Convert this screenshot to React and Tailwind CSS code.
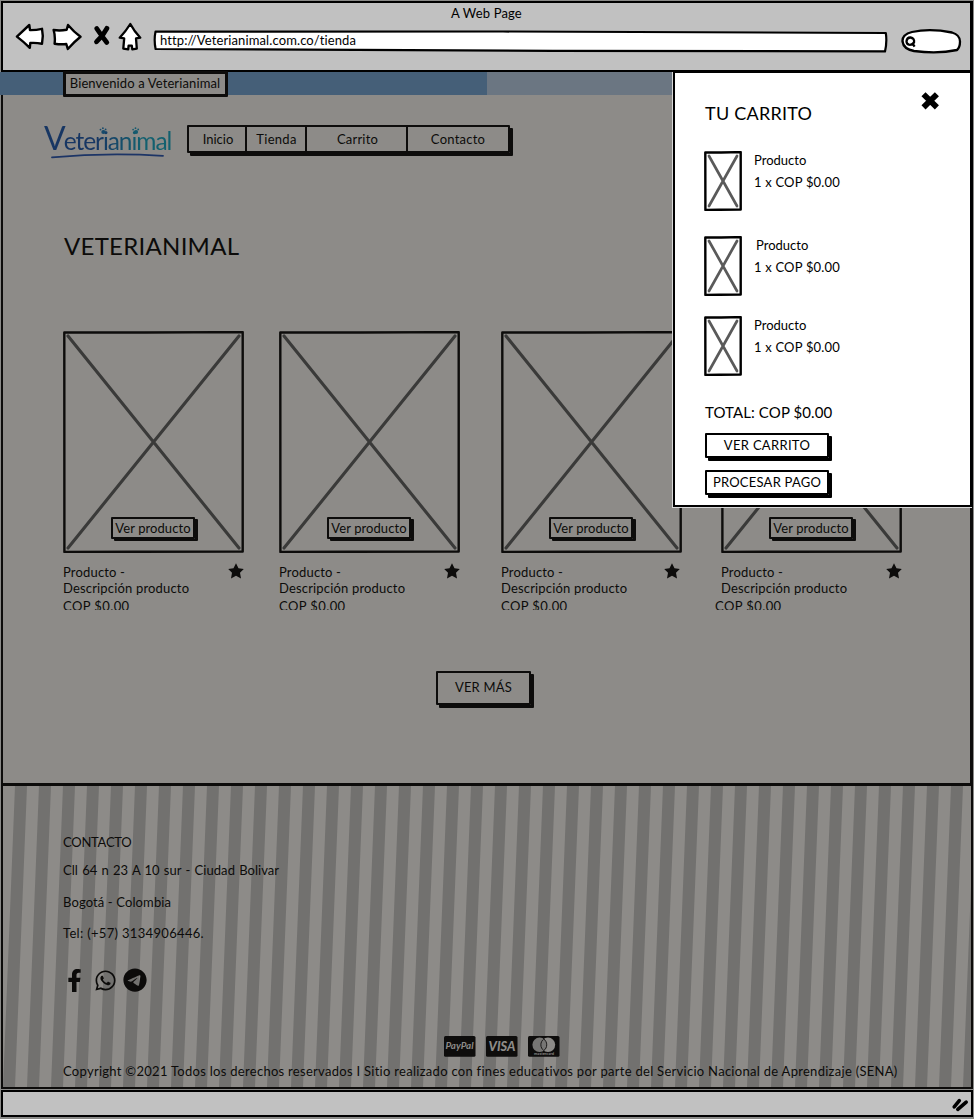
import { FaFacebookF, FaWhatsapp } from "react-icons/fa";
import { FaTelegram } from "react-icons/fa6";

const star =
  "M8 0.2 L10.5 5.2 L15.8 6 L12 9.8 L13 15.4 L8 12.7 L3 15.4 L4 9.8 L0.2 6 L5.5 5.2 Z";

/* Picture placeholder: a slightly uneven ink frame with a grey cross. */
function Placeholder({ width: w, height: h, frame, cross, stroke }) {
  return (
    <svg className="absolute inset-0" width={w} height={h} viewBox={`0 0 ${w} ${h}`} fill="none">
      <path
        d={`M5 5 L${w - 5} ${h - 5} M${w - 5} 5 L5 ${h - 5}`}
        stroke={cross}
        strokeWidth={stroke}
        strokeLinecap="round"
      />
      <path
        d={`M1.3 1.5 L${w * 0.45} 1.5 L${w - 1.3} 1.1 L${w - 1.3} ${h - 1.4} L${w * 0.4} ${h - 1.3} L1.4 ${h - 1.1} Z`}
        stroke={frame}
        strokeWidth="2.4"
        strokeLinejoin="round"
      />
    </svg>
  );
}

function Button({ className, children }) {
  return (
    <button
      className={`flex items-center justify-center whitespace-nowrap rounded-[1px] border-2 leading-4 ${className}`}
    >
      {children}
    </button>
  );
}

function BrowserBar() {
  return (
    <header className="ml-px mt-px h-[71px] w-[972px] border-b-2 border-l-2 border-r-[3px] border-t-2 border-black bg-[#c1c1c1]">
      <div className="mt-[2px] pl-[448px] text-[13px] leading-4 tracking-[0.16px]">A Web Page</div>
      <div className="flex pl-[12px]">
        <svg className="mt-px" width="30" height="30" fill="#fff" stroke="#000" strokeWidth="2.4" strokeLinejoin="round">
          <path d="M1.9 14.6 L14.3 3 L15 8.1 Q21 8.2 27 6.8 Q28.6 14 27 21.7 Q21 20.6 15.3 21 L14.8 25.8 Q9 20 1.9 14.6 Z" />
        </svg>
        <svg className="ml-[7px] mt-px" width="30" height="30" fill="#fff" stroke="#000" strokeWidth="2.4" strokeLinejoin="round">
          <path d="M1.6 8 Q8 9 14.7 7.7 L16 3 Q22 10 28.5 14.8 Q22 20 15.8 27 L14.3 22 Q9 22.6 2.6 21.7 Q3.5 14 1.6 8 Z" />
        </svg>
        <svg className="ml-[10px] mt-[3px]" width="20" height="24" fill="none" stroke="#000" strokeWidth="4.8" strokeLinecap="round">
          <path d="M4.7 4.5 Q9 11 14.8 18.4 M14.9 4.3 Q11 12 4.5 17.8" />
        </svg>
        <svg className="ml-[5px] mt-px" width="26" height="30" fill="#fff" stroke="#000" strokeWidth="2.3" strokeLinejoin="round">
          <path d="M13.3 2 Q17 9 23.3 15.7 L19 16.3 L19.8 26.6 L15.3 27.3 L14.8 23.6 L11.6 23.6 L11.2 27.3 L6.3 26.6 L7.2 16.3 L2.7 15.7 Q9 9 13.3 2 Z" />
        </svg>
        <div className="relative ml-[10px] mt-[9px] h-[24px] w-[736px]">
          <svg className="absolute inset-0" width="736" height="24" fill="#fff" stroke="#000" strokeWidth="2.2" strokeLinejoin="round">
            <path d="M2.5 1.6 L350 1.5 L732.8 3 Q734.2 12 732 21.4 L400 20.8 L2.6 19 Q0.8 10 2.5 1.6 Z" />
          </svg>
          <span className="relative block pl-[7px] pt-[2px] text-[13px] leading-4 tracking-[0.12px]">
            http://Veterianimal.com.co/tienda
          </span>
        </div>
        <svg className="ml-[11px] mt-[7px]" width="62" height="28" fill="#fff" stroke="#000" strokeWidth="2.3">
          <path d="M2.5 13.5 Q2 6.5 12 4 Q30 0.1 52 4.5 Q60 7 60 13.5 Q60 19.5 57 22 Q38 26 14 23 Q3.5 21 2.5 13.5 Z" />
          <path d="M6.5 13.2 Q7 9.3 10.5 9.5 Q14.8 10.3 14 14.5 Q12 17.3 9 16.7 Q6.5 15.9 6.5 13.2 Z M12.5 15.5 L14.6 18.6" />
        </svg>
      </div>
    </header>
  );
}

function Logo() {
  return (
    <div className="relative h-[36px] w-[130px]">
      <div className="flex items-baseline bg-linear-to-r from-[#173663] from-40% to-[#12606f] to-75% bg-clip-text text-transparent">
        <span className="text-[32px] font-normal leading-[26px]">V</span>
        <span className="-ml-[2px] text-[24.5px] leading-[26px] tracking-[-1.05px]">eterianimal</span>
      </div>
      <svg className="absolute inset-0" width="130" height="36" fill="none">
        <path d="M8 32.3 Q62 27.5 119 30.8" stroke="#1d3566" strokeWidth="1.8" strokeLinecap="round" />
        <g fill="#174a6b">
          <circle cx="59.4" cy="7" r="2.1" /><circle cx="56.5" cy="4.6" r="0.9" /><circle cx="58.9" cy="3.2" r="0.9" /><circle cx="61.6" cy="4.4" r="0.9" />
        </g>
        <g fill="#155a6e">
          <circle cx="92" cy="7" r="2.1" /><circle cx="89.1" cy="4.6" r="0.9" /><circle cx="91.5" cy="3.2" r="0.9" /><circle cx="94.2" cy="4.4" r="0.9" />
        </g>
      </svg>
    </div>
  );
}

function Product({ className, starClass, priceClass }) {
  return (
    <article className={`w-[181px] shrink-0 ${className}`}>
      <div className="relative flex h-[222px] items-end justify-center pb-[14px] pr-px">
        <Placeholder width={181} height={222} stroke={3.1} frame="#0d0c0b" cross="#3a3a39" />
        <Button className="relative h-[22px] w-[84px] border-[#0d0c0b] text-[13px] tracking-[0.08px] shadow-[3px_2px_0_#0d0c0b]">
          Ver producto
        </Button>
      </div>
      <div className="flex justify-between pt-[11px] text-[13px]">
        <p className="leading-4 tracking-[0.17px]">
          Producto -<br />
          Descripción producto
        </p>
        <svg className={`-mt-px shrink-0 ${starClass}`} width="16" height="16" fill="#0d0c0b">
          <path d={star} />
        </svg>
      </div>
      <p className={`mt-[2px] h-[12px] overflow-hidden text-[13px] leading-4 tracking-[0.4px] ${priceClass}`}>COP $0.00</p>
    </article>
  );
}

function CartItem({ className, nameClass }) {
  return (
    <div className={`-ml-px flex h-[60px] ${className}`}>
      <div className="relative h-[60px] w-[38px]">
        <Placeholder width={38} height={60} stroke={2.7} frame="#000" cross="#5a5a5a" />
      </div>
      <div className="flex flex-col gap-[6px] pl-[12px] pt-px text-[13px] leading-4">
        <span className={nameClass}>Producto</span>
        <span className="tracking-[0.19px]">1 x COP $0.00</span>
      </div>
    </div>
  );
}

function Cart() {
  return (
    <aside className="absolute left-[673px] top-[71px] h-[436px] w-[300px] border-2 border-r-[3px] border-black bg-white pl-[30px] text-black shadow-[-1px_1px_0_#d8d8d8]">
      <svg className="absolute left-[246px] top-[18px]" width="20" height="20" stroke="#000" strokeWidth="5.8">
        <path d="M2.5 3.2 L15.9 16.4 M15.9 3.2 L2.5 16.4" />
      </svg>
      <h2 className="mt-[28px] text-[18px] leading-6 tracking-[0.25px]">TU CARRITO</h2>
      <CartItem className="mt-[26px]" nameClass="" />
      <CartItem className="mt-[25px]" nameClass="pl-[2px]" />
      <CartItem className="mt-[20px]" nameClass="" />
      <p className="mt-[26px] text-[15px] leading-5 tracking-[0.1px]">TOTAL: COP $0.00</p>
      <Button className="mt-[11px] h-[25px] w-[124px] border-black pb-[2px] text-[13px] tracking-[0.31px] shadow-[3px_3px_0_#000]">
        VER CARRITO
      </Button>
      <Button className="mt-[12px] h-[25px] w-[124px] border-black pb-[2px] text-[13px] tracking-[0.23px] shadow-[3px_3px_0_#000]">
        PROCESAR PAGO
      </Button>
    </aside>
  );
}

function Payments() {
  return (
    <div className="flex gap-[10px] pl-[441px] font-['Lato',sans-serif]">
      <svg width="32" height="21">
        <rect width="31.5" height="20.7" rx="1.5" fill="#0e0d0c" />
        <text x="1.5" y="13" fontSize="8.5" fontWeight="700" fontStyle="italic" fill="#8d8b88" textLength="28" lengthAdjust="spacingAndGlyphs">PayPal</text>
      </svg>
      <svg width="32" height="21">
        <rect width="31.5" height="20.7" rx="1.5" fill="#0e0d0c" />
        <text x="2.5" y="14.8" fontSize="12.4" fontWeight="900" fontStyle="italic" fill="#8d8b88" textLength="27" lengthAdjust="spacingAndGlyphs">VISA</text>
      </svg>
      <svg width="32" height="21">
        <rect width="31.5" height="20.7" rx="1.5" fill="#0e0d0c" />
        <circle cx="11.6" cy="8.8" r="7.2" fill="#777674" />
        <circle cx="20" cy="8.8" r="7.2" fill="#8d8b88" />
        <path d="M15.8 3 A7.2 7.2 0 0 1 15.8 14.6 A7.2 7.2 0 0 1 15.8 3 Z" fill="#777674" stroke="#0e0d0c" strokeWidth="0.9" />
        <text x="6" y="19" fontSize="3.6" fontWeight="700" fill="#8d8b88" textLength="20" lengthAdjust="spacingAndGlyphs">mastercard</text>
      </svg>
    </div>
  );
}

function Stripes() {
  return (
    <svg className="absolute inset-0" width="968" height="301">
      {Array.from({ length: 42 }, (_, i) => {
        const x = 12 + i * 24;
        return <path key={i} d={`M${x} 0 h12 l-12 301 h-12 Z`} fill="#72716f" />;
      })}
    </svg>
  );
}

export default function App() {
  return (
    <div className="relative flex h-[1119px] w-[974px] flex-col overflow-hidden bg-[#8a8a88] font-['Lato','Noto_Sans',sans-serif] text-black">
      <BrowserBar />
      <main className="ml-px h-[711px] w-[972px] border-l-2 border-r-[3px] border-[#0d0c0b] bg-[#8d8b88] text-[#0c0b0a]">
        <div className="-ml-[3px] flex h-[23px] items-start">
          <div className="flex h-[23px] w-[487px] items-start bg-[#455f78] pl-[63px]">
            <div className="-mt-px flex h-[26px] w-[165px] items-center justify-center whitespace-nowrap rounded-[1px] border-[3px] border-[#0d0c0b] bg-[#8d8b88] pb-[2px] pr-px text-[13px] leading-4 tracking-[0.12px]">
              Bienvenido a Veterianimal
            </div>
          </div>
          <div className="h-[23px] w-[186px] bg-[#6b7682]" />
        </div>

        <div className="mt-[30px] flex h-[36px] pl-[41px]">
          <Logo />
          <nav className="ml-[13px] flex h-[28px] w-[323px] rounded-[1px] border-2 border-[#0d0c0b] text-[13px] leading-4 shadow-[3px_3px_0_#0d0c0b] *:flex *:items-center *:justify-center">
            <a className="w-[58px] border-r-2 border-[#0d0c0b] pl-[2px]">Inicio</a>
            <a className="w-[60px] border-r-2 border-[#0d0c0b] pl-px tracking-[0.28px]">Tienda</a>
            <a className="w-[101px] border-r-2 border-[#0d0c0b] pl-[2px] tracking-[0.21px]">Carrito</a>
            <a className="w-[100px] tracking-[0.23px]">Contacto</a>
          </nav>
        </div>

        <h1 className="mt-[69px] pl-[61px] text-[24px] leading-8 tracking-[0.27px]">VETERIANIMAL</h1>

        <section className="mt-[69px] flex pl-[60px]">
          <Product className="" starClass="" priceClass="" />
          <Product className="ml-[35px]" starClass="" priceClass="" />
          <Product className="ml-[41px]" starClass="mr-[2px]" priceClass="" />
          <Product className="ml-[39px]" starClass="" priceClass="-ml-[6px]" />
        </section>

        <Button className="ml-[433px] mt-[61px] h-[34px] w-[95px] border-[#0d0c0b] pb-[2px] text-[13px] tracking-[0.22px] shadow-[3px_3px_0_#0d0c0b]">
          VER MÁS
        </Button>
      </main>

      <footer className="relative ml-px h-[306px] w-[972px] border-b-2 border-l-2 border-r-2 border-t-[3px] border-[#0c0b0a] bg-[#8d8b88] text-[13px] leading-4 text-[#0c0b0a]">
        <Stripes />
        <div className="relative">
          <h3 className="pl-[60px] pt-[48px] tracking-[-0.25px]">CONTACTO</h3>
          <p className="mt-[12px] pl-[60px] tracking-[0.05px] [word-spacing:0.8px]">Cll 64 n 23 A 10 sur - Ciudad Bolivar</p>
          <p className="mt-[16px] pl-[60px] tracking-[0.12px]">Bogotá - Colombia</p>
          <p className="mt-[15px] pl-[60px] tracking-[0.32px]">Tel: (+57) 3134906446.</p>
          <div className="mt-[27px] flex h-[24px] items-center pl-[60px]">
            <FaFacebookF size={23} />
            <FaWhatsapp size={23} className="ml-[8px]" />
            <FaTelegram size={24} className="ml-[6px]" />
          </div>
          <div className="mt-[44px]">
            <Payments />
          </div>
          <p className="mt-[6px] whitespace-nowrap pl-[60px] tracking-[0.285px]">
            Copyright ©2021 Todos los derechos reservados I Sitio realizado con fines educativos por parte del Servicio
            Nacional de Aprendizaje (SENA)
          </p>
        </div>
      </footer>

      <div className="ml-px mt-[1px] flex h-[27px] w-[972px] items-center justify-end border-[2.5px] border-r-2 border-black bg-[#c1c1c1] pr-[2px]">
        <svg width="18" height="16" stroke="#000" strokeWidth="3.6" strokeLinecap="round">
          <path d="M3.2 10.8 L8.3 4.6 M6.8 13.4 L15.2 6.2" />
        </svg>
      </div>

      <Cart />
    </div>
  );
}
